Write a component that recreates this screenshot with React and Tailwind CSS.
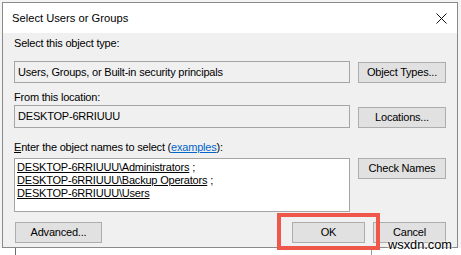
import React from 'react';

const font = "font-['Liberation_Sans',Arial,sans-serif]";

function WinButton({ children, className = '' }) {
  return (
    <div
      className={`h-[21px] flex items-center justify-center bg-[#e1e1e1] border border-[#adadad] text-[11px] tracking-[-0.2px] text-black ${className}`}
    >
      {children}
    </div>
  );
}

export default function App() {
  const names = ['Administrators', 'Backup Operators', 'Users'];

  return (
    <div className={`relative w-[461px] h-[255px] overflow-hidden bg-[#f4f4f4] ${font}`}>
      <div className="pl-[2px] pt-[2px]">
        {/* Dialog */}
        <div className="w-[456px] h-[246px] border border-[#8a8a8a] flex flex-col">
          {/* Title bar */}
          <div className="h-[30px] bg-white flex items-center justify-between pl-[9px] pr-[9px]">
            <span className="text-[11.2px] text-black">Select Users or Groups</span>
            <svg width="11" height="11" viewBox="0 0 11 11" className="mr-px">
              <path d="M0.5 0.5 L10.5 10.5 M10.5 0.5 L0.5 10.5" stroke="#111" strokeWidth="1" />
            </svg>
          </div>

          {/* Body */}
          <div className="flex-1 bg-[#f0f0f0] px-[11px] text-[11px] tracking-[-0.2px] text-black">
            <div className="mt-[3px] h-[14px] leading-[14px]">Select this object type:</div>
            <div className="mt-[11px] flex gap-2 items-start">
              <div className="w-[336px] h-[22px] border border-[#a5a5a5] flex items-center pl-[3px]">
                Users, Groups, or Built-in security principals
              </div>
              <WinButton className="w-[88px] mt-px">Object Types...</WinButton>
            </div>

            <div className="mt-[7px] h-[14px] leading-[14px]">From this location:</div>
            <div className="mt-px flex gap-2 items-start">
              <div className="w-[336px] h-[23px] border border-[#a5a5a5] flex items-center pl-[3px]">
                DESKTOP-6RRIUUU
              </div>
              <WinButton className="w-[88px] mt-[2px]">Locations...</WinButton>
            </div>

            <div className="mt-[12px] h-[14px] leading-[14px]">
              <span className="underline">E</span>nter the object names to select (
              <span className="text-[#0066cc] underline">examples</span>):
            </div>
            <div className="mt-[4px] flex gap-2 items-start">
              <div className="w-[336px] h-[54px] border border-[#a5a5a5] bg-white pl-[2px] pt-[2px] leading-[13px]">
                {names.map((n, i) => (
                  <div key={n}>
                    <span className="underline">DESKTOP-6RRIUUU\{n}</span>
                    {i < names.length - 1 && <span className="ml-[3px]">;</span>}
                  </div>
                ))}
              </div>
              <WinButton className="w-[88px]">Check Names</WinButton>
            </div>

            <div className="mt-[10px] flex items-center">
              <WinButton className="w-[87px] ml-px">Advanced...</WinButton>
              <div className="flex-1" />
              <WinButton className="w-[73px]">OK</WinButton>
              <WinButton className="w-[73px] ml-2">Cancel</WinButton>
            </div>
          </div>
        </div>
      </div>

      {/* Background window edges below the dialog */}
      <div className="flex h-[8px] bg-white">
        <div className="ml-[15px] w-px bg-[#6b6b6b]" />
        <div className="ml-[355px] w-px bg-[#9a9a9a]" />
      </div>

      {/* Highlight */}
      <div className="absolute left-[277px] top-[213px] w-[103px] h-[37px] border-4 border-[#f0574b]" />

      {/* Watermark */}
      <div className="absolute left-[388px] top-[239px] text-[12.8px] leading-[12px] text-black [text-shadow:0_0_2px_#fff,0_0_2px_#fff,0_0_3px_#fff]">
        wsxdn.com
      </div>
    </div>
  );
}
